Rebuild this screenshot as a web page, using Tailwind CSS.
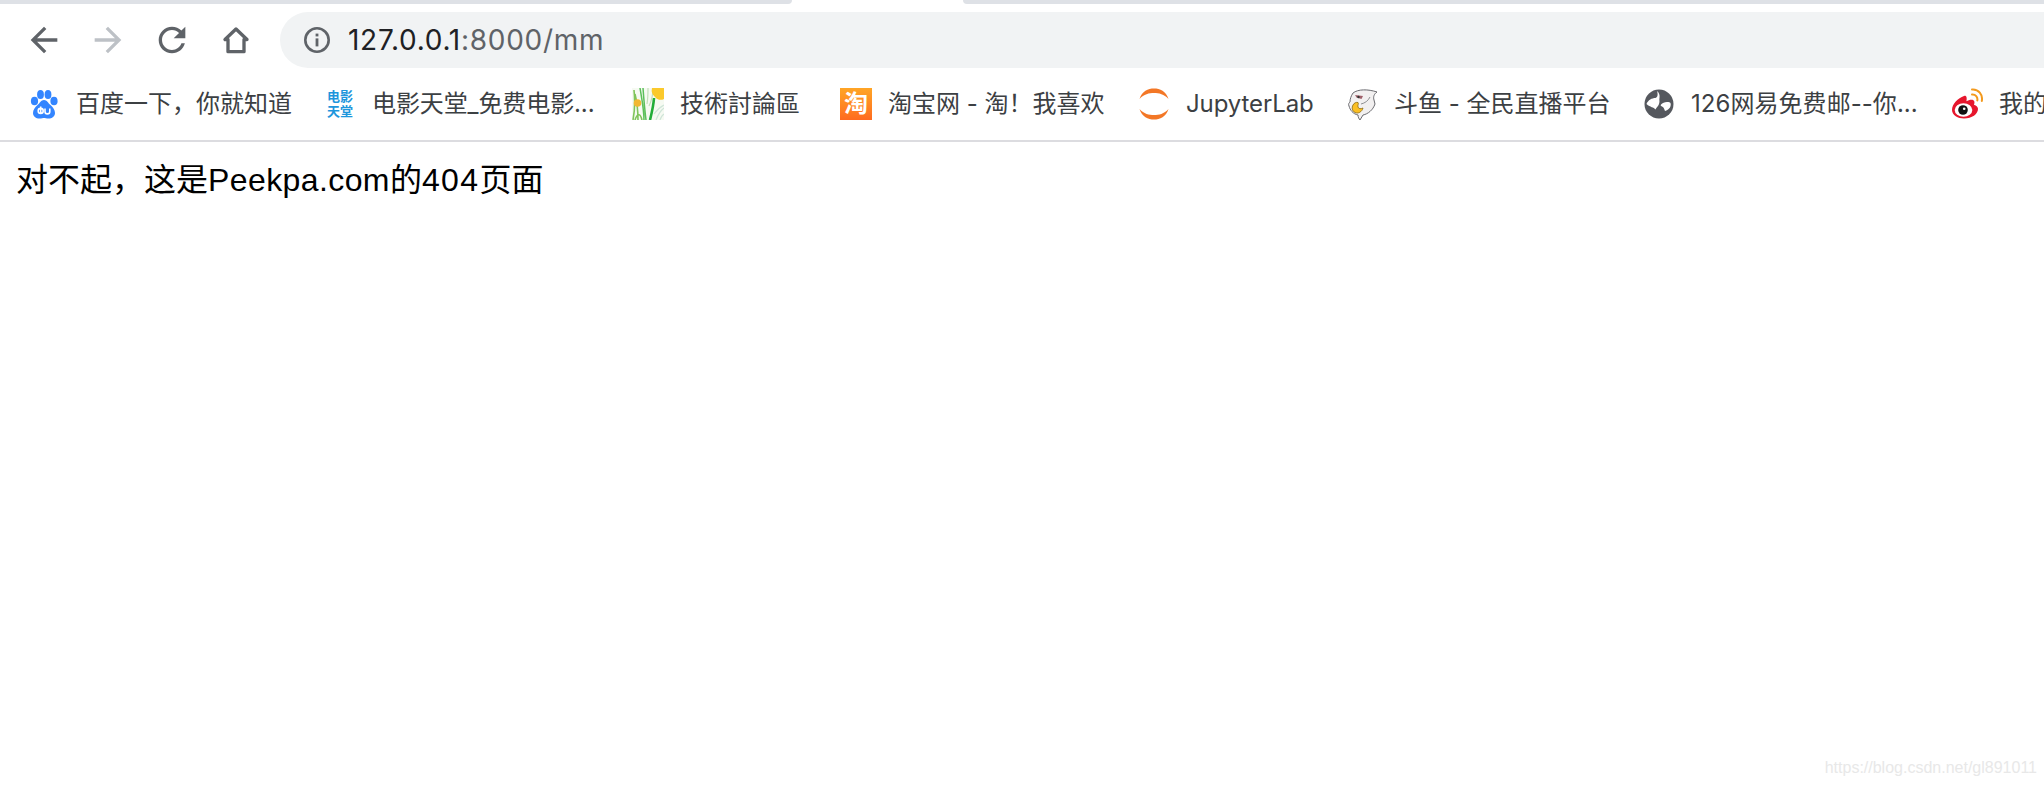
<!DOCTYPE html>
<html lang="zh-CN">
<head>
<meta charset="utf-8">
<title>Peekpa 404</title>
<script src="https://cdn.jsdelivr.net/npm/@tailwindcss/browser@4"></script>
</head>
<body class="relative h-[786px] w-[2044px] overflow-hidden bg-white">
<header class="flex flex-col">
  <div class="flex h-1 justify-between">
    <div class="w-[792px] rounded-br-lg bg-[#dee1e6]"></div>
    <div class="w-[1081px] rounded-bl-lg bg-[#dee1e6]"></div>
  </div>
  <div class="flex h-16 items-end gap-3 pl-3">
    <div class="flex h-14 items-center">
      <div class="flex w-16 justify-center">
        <svg class="size-10" viewBox="0 0 24 24" fill="#5f6368"><path d="M20 11H7.830l5.590-5.590L12 4l-8 8 8 8 1.410-1.410L7.830 13H20v-2z"/></svg>
      </div>
      <div class="flex w-16 justify-center">
        <svg class="size-10" viewBox="0 0 24 24" fill="#bdc1c6"><path d="M4 11h12.170l-5.590-5.590L12 4l8 8-8 8-1.410-1.410L16.170 13H4v-2z"/></svg>
      </div>
      <div class="flex w-16 justify-center">
        <svg class="size-10" viewBox="0 0 24 24" fill="#5f6368"><path d="M17.650 6.350C16.200 4.900 14.210 4 12 4c-4.420 0-7.990 3.580-7.990 8s3.570 8 7.990 8c3.730 0 6.840-2.550 7.730-6h-2.080c-.82 2.330-3.040 4-5.650 4-3.310 0-6-2.690-6-6s2.690-6 6-6c1.660 0 3.140.69 4.220 1.780L13 11h7V4l-2.350 2.350z"/></svg>
      </div>
      <div class="flex w-16 justify-center">
        <svg class="size-10" viewBox="0 0 24 24" fill="none" stroke="#5f6368" stroke-width="2" stroke-linejoin="round"><path d="M12 5.400 5.400 11.700H7.200V19h9.600v-7.300h1.800z"/></svg>
      </div>
    </div>
    <div class="flex h-14 flex-1 items-center gap-[15px] rounded-l-[28px] bg-[#f1f3f4] pl-[21px] font-['Inter',sans-serif] text-[28px] tracking-[0.72px]">
      <svg class="size-8" viewBox="0 0 32 32" fill="#5f6368"><path fill-rule="evenodd" d="M16 3a13 13 0 1 0 0 26 13 13 0 0 0 0-26Zm0 2.600a10.400 10.400 0 1 1 0 20.800 10.400 10.400 0 0 1 0-20.800Z"/><rect x="14.600" y="14.400" width="2.800" height="8"/><rect x="14.600" y="9.600" width="2.800" height="2.800"/></svg>
      <span class="text-[#202124]">127.0.0.1<span class="text-[#5f6368]">:8000/mm</span></span>
    </div>
  </div>
  <nav class="flex h-[74px] items-center overflow-hidden border-b-2 border-[#dcdce0] pl-7 font-['Inter','Noto_Sans_CJK_SC',sans-serif] text-2xl whitespace-nowrap text-[#3c4043]">
    <div class="flex w-[296px] shrink-0 items-center gap-4">
      <svg class="size-8" viewBox="0 0 32 32"><g fill="#3385ff"><ellipse cx="6.500" cy="13" rx="3.600" ry="4.300"/><ellipse cx="12.500" cy="6.500" rx="3.400" ry="4.500"/><ellipse cx="20" cy="6.500" rx="3.400" ry="4.500"/><ellipse cx="26" cy="13" rx="3.600" ry="4.300"/><path d="M16 12c-3 0-4 3-6.500 5S5 22 5 25c0 3.500 3 5.500 6.500 5.500 2 0 3.500-.6 4.500-.6s2.500.6 4.500.6c3.500 0 6.500-2 6.500-5.500 0-3-2-6-4.500-8S19 12 16 12Z"/></g><path d="M12.700 18.500v7M12.700 25.400a2.500 2.500 0 1 1 0-5 2.500 2.500 0 0 1 0 5ZM17 20.500v3a2.400 2.400 0 0 0 4.800 0v-3" fill="none" stroke="#fff" stroke-width="1.600"/></svg>
      <span>百度一下，你就知道</span>
    </div>
    <div class="flex w-[308px] shrink-0 items-center gap-4">
      <span class="flex size-8 flex-col items-center justify-center text-[13px] leading-[15px] font-bold text-[#1e96dc]"><span>电影</span><span>天堂</span></span>
      <span class="tracking-[-0.1px]">电影天堂_免费电影...</span>
    </div>
    <div class="flex w-[208px] shrink-0 items-center gap-4">
      <svg class="size-8" viewBox="0 0 32 32"><rect width="32" height="32" fill="#f6faf2"/><path d="M1 32C3 22 3 12 2 2M6 32C6 22 5 14 3 6M3 32C5 26 8 24 10 32" stroke="#7fc45a" stroke-width="1.600" fill="none"/><path d="M18 32c2-8 3.500-14 4-22" stroke="#22ad38" stroke-width="2.600" fill="none"/><path d="M12 32C12 22 10 12 8 0M14 32C13 24 12 14 11 0" stroke="#5cbf5a" stroke-width="1.500" fill="none"/><path d="M17 18C20 12 21 6 21 0M15 16C16 10 16 5 16 0" stroke="#c3e0ba" stroke-width="1.200" fill="none"/><path d="M24 32c2-5 4-9 8-12M28 32c1-3 2-5 4-6M22 26c3-4 6-7 10-9" stroke="#cfe5d8" stroke-width="1.200" fill="none"/><path d="M20 0h12v11a7 7 0 0 1-9-2 9 9 0 0 1-3-9Z" fill="#fbc92c"/><circle cx="5.500" cy="15" r="3.800" fill="#f2b731"/></svg>
      <span>技術討論區</span>
    </div>
    <div class="flex w-[298px] shrink-0 items-center gap-4">
      <span class="flex size-8 items-center justify-center bg-linear-to-b from-[#ffa526] to-[#ff6a1f] text-2xl leading-none font-bold text-white">淘</span>
      <span>淘宝网 - 淘！我喜欢</span>
    </div>
    <div class="flex w-[208px] shrink-0 items-center gap-4">
      <svg class="size-8" viewBox="0 0 32 32" fill="#f37726"><path d="M1.500 11C4 3 10 .5 16 .5S28 3 30.500 11C26 6 21 5 16 5S6 6 1.500 11Z"/><path d="M1.500 21C4 29 10 31.500 16 31.500S28 29 30.500 21C26 26 21 27 16 27S6 26 1.500 21Z"/></svg>
      <span class="tracking-[-0.1px]">JupyterLab</span>
    </div>
    <div class="flex w-[297px] shrink-0 items-center gap-4">
      <svg class="size-8" viewBox="0 0 32 32"><path d="M7 5C12 1 22 1 31 4c-3 2-4 5-3 8l1 4c-2 6-7 10-12 11l-3 5c-1-1-2-3-2-5-5-1-8-5-9-9-1-2 0-3 1-4 0-3 1-6 3-9Z" fill="#f2f0f0" stroke="#6b6b70" stroke-width="1"/><path d="M9 7l8 1-1.500 3-5-1.500Z" fill="#a0606a"/><circle cx="12.500" cy="9" r="1.200" fill="#333"/><path d="M7 17c1-2 3-3 5-2.500 1 1-.5 2.500 0 4.500s3 2 5 1c-1 4-5 6-8 4.500-3-1.500-3.500-5-2-7.500Z" fill="#fbbf24" stroke="#8a6a10" stroke-width=".8"/><path d="M15 16c4-1 7-3 9-7" fill="none" stroke="#8f8f92" stroke-width="1"/></svg>
      <span>斗鱼 - 全民直播平台</span>
    </div>
    <div class="flex w-[308px] shrink-0 items-center gap-4">
      <svg class="size-8" viewBox="0 0 32 32"><circle cx="16" cy="16" r="14.500" fill="#55585e"/><path d="M3.500 16C5 12 9 10 12.500 10c2.500-1 2.500-4 1.500-7 2 1.500 3 4 2.500 7-.5 2.500 .5 3-.5 6-.7 2-2.500 3.500-3.500 5.500-2-2.500-5-2-9-5.500ZM18 16.500c2-2 5-3 9-2 1 .5 1 3 0 5-1.500 2-3 3-5 3.500-1-2-1-4-3-4.500-1.500-.5-1.500-1-1-2Z" fill="#fff"/></svg>
      <span class="tracking-[0.05px]">126网易免费邮--你...</span>
    </div>
    <div class="flex shrink-0 items-center gap-4">
      <svg class="size-8" viewBox="0 0 32 32" fill="none"><path d="M13 8C7 10 1 16 1 22c0 5 6 8.500 12 8.500 8 0 14-4.500 14-9.500 0-3-3-4-4-4.300.8-2 .6-3.700-.6-4.500-1.800-1-5 0-7 1 .6-2.500.4-5-1-5.500-.4-.1-.8 0-1.400.3Z" fill="#e6162d"/><ellipse cx="12.500" cy="22" rx="8.800" ry="6.800" fill="#fff"/><circle cx="12" cy="22" r="4.800" fill="#111"/><circle cx="13.200" cy="20.800" r="1.300" fill="#fff"/><path d="M21 6.500c3.500-.3 6 2.500 5.300 6M21 1.500c6.500-.6 11 5 9.800 11.500" stroke="#f39a1e" stroke-width="2" stroke-linecap="round"/></svg>
      <span>我的</span>
    </div>
  </nav>
</header>
<main class="px-4 pt-5 font-['Liberation_Sans','Noto_Sans_CJK_SC',sans-serif] text-[32px] leading-[37px] text-black">
  <p>对不起，这是<span class="tracking-[0.4px]">Peekpa.com</span>的<span class="tracking-[1.4px]">404</span>页面</p>
</main>
<div class="absolute right-[7px] bottom-[9px] font-['Liberation_Sans',sans-serif] text-[16px] leading-[18px] text-[#e8e8e8]">https://blog.csdn.net/gl891011</div>
</body>
</html>
